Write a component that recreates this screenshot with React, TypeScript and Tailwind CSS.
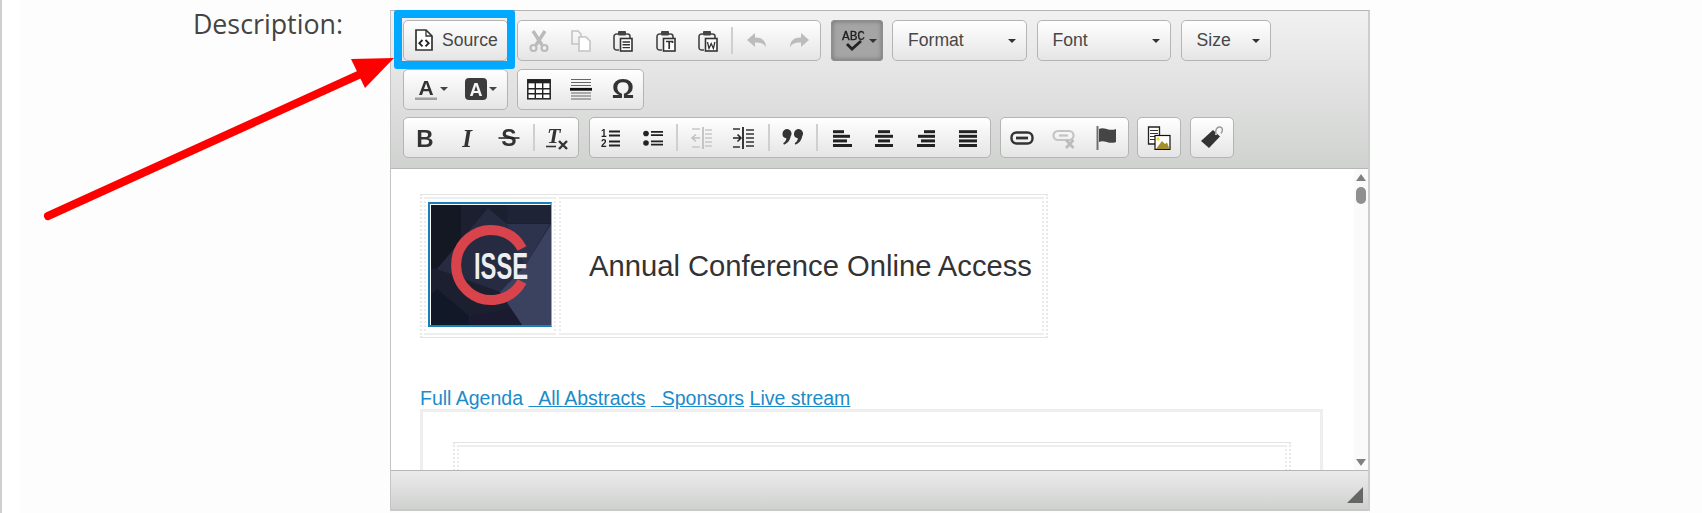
import React from "react";

const Ic = ({ children, w = 24 }: { children: React.ReactNode; w?: number }) => (
  <svg width={w} height={24} viewBox={`0 0 ${w} 24`} className="block shrink-0 blur-[0.35px]">
    {children}
  </svg>
);

const Caret = ({ c = "#333" }: { c?: string }) => (
  <span className="block w-0 h-0 border-x-[4px] border-t-[4px] border-x-transparent" style={{ borderTopColor: c }} />
);

const Group = ({ children }: { children: React.ReactNode }) => (
  <div className="flex h-[41px] items-center rounded-[5px] border border-[#b4b4b4] bg-linear-to-b from-[#ffffff] to-[#e5e5e5]">
    {children}
  </div>
);

const Btn = ({ children }: { children: React.ReactNode }) => (
  <div className="flex w-[42.2px] h-full items-center justify-center">{children}</div>
);

const Narrow = ({ children, w }: { children: React.ReactNode; w: string }) => (
  <div className={`flex ${w} h-full items-center justify-center`}>{children}</div>
);

const Sep = () => <div className="w-[2px] h-[27px] mx-[2.35px] bg-[#cfcfcf]" />;

const Combo = ({ label, w }: { label: string; w: string }) => (
  <div className={`flex h-[41px] ${w} items-center justify-between pl-[15px] pr-[10px] rounded-[5px] border border-[#b4b4b4] bg-linear-to-b from-[#ffffff] to-[#e5e5e5]`}>
    <span className="text-[17.6px] text-[#474747]">{label}</span>
    <Caret />
  </div>
);

const PasteBase = ({ children }: { children?: React.ReactNode }) => (
  <>
    <path d="M7 5H5.5A2.5 2.5 0 0 0 3 7.5v11A2.5 2.5 0 0 0 5.5 21H8M15 5h1.500A2.500 2.500 0 0 1 19 7.500V9" fill="none" stroke="#444" strokeWidth="1.600" />
    <rect x="7" y="2" width="8" height="4.500" rx="1" fill="#444" />
    <rect x="9.500" y="9.500" width="11.500" height="12.500" fill="#fff" stroke="#333" strokeWidth="1.600" />
    {children}
  </>
);

const Bars = ({ xs }: { xs: [number, number][] }) => (
  <>
    {xs.map(([x, w], i) => (
      <rect key={i} x={x} y={4.200 + i * 4.600} width={w} height="3" fill="#222" />
    ))}
  </>
);

const Logo = () => (
  <svg width={120} height={120} viewBox="0 0 120 120" className="block">
    <rect width="120" height="120" fill="#1b1f30" />
    <polygon points="0,0 30,0 30,60 0,64" fill="#131822" />
    <polygon points="57,3 76,19 119,19 94,61 69,87 6,64" fill="#262b42" />
    <polygon points="76,0 120,0 120,18 76,18" fill="#1f2336" />
    <polygon points="76,19 119,19 94,61" fill="#2e334d" />
    <polygon points="120,19 120,120 91,120 69,87 94,61" fill="#3b4260" />
    <polygon points="6,84 38,111 38,120 0,120 0,90" fill="#111827" />
    <polygon points="40,111 80,104 91,120 38,120" fill="#1a1b30" />
    <path d="M91 43.500A35 35 0 1 0 91 76.500" fill="none" stroke="#d9444c" strokeWidth="10" />
    <text x="43" y="74" fontFamily="'Liberation Sans', sans-serif" fontWeight="700" fontSize="36" fill="#eceef0" textLength="54" lengthAdjust="spacingAndGlyphs">ISSE</text>
  </svg>
);

const sans = "'Liberation Sans', sans-serif";
const serif = "'Liberation Serif', serif";

export default function App() {
  return (
    <div className="relative flex w-[1702px] h-[513px] overflow-hidden bg-[#fdfdfd] font-['Liberation_Sans',sans-serif]">
      <div className="w-[20px] h-full border-l-2 border-[#cfcfcf] bg-white" />
      <div className="w-[323px] pt-[6px] text-right text-[26.8px] leading-[36px] text-[#444] font-['Open_Sans',sans-serif]">Description:</div>
      <div className="ml-[47px] mt-[10px] flex flex-col w-[980px] h-[501px] border-l border-t border-r-2 border-b-2 border-t-[#b6b6b6] border-l-[#c4c4c4] border-r-[#cdcdcd] border-b-[#c8c8c8] bg-white">
        {/* toolbar */}
        <div className="flex flex-col h-[158px] pt-[9px] pl-[12px] gap-[7.5px] border-b border-[#b6b6b6] bg-linear-to-b from-[#f1f1f1] to-[#d0d2d0]">
          <div className="flex gap-[9.5px]">
            <Group>
              <div className="flex w-[102.5px] items-center pl-[11px] gap-[9px]">
                <svg width="18" height="22" viewBox="0 0 18 22" className="block shrink-0 blur-[0.3px]">
                  <path d="M1 1h10l6 6v14H1z" fill="#fff" stroke="#333" strokeWidth="1.700" />
                  <path d="M11 1v6h6" fill="none" stroke="#333" strokeWidth="1.300" />
                  <path d="M7.500 11l-3.200 3.200 3.200 3.200M10.500 11l3.200 3.200-3.200 3.200" fill="none" stroke="#222" strokeWidth="1.800" />
                </svg>
                <span className="text-[17.6px] text-[#474747]">Source</span>
              </div>
            </Group>
            <Group>
              <Btn>
                <Ic>
                  <path d="M6 2l9 14M18 2L9 16" stroke="#bbb" strokeWidth="3.400" fill="none" />
                  <circle cx="6.500" cy="19" r="3" fill="none" stroke="#bbb" strokeWidth="2.200" />
                  <circle cx="17.500" cy="19" r="3" fill="none" stroke="#bbb" strokeWidth="2.200" />
                </Ic>
              </Btn>
              <Btn>
                <Ic>
                  <path d="M10 15H3V2h6l3 3v3" fill="none" stroke="#c4c4c4" strokeWidth="1.600" />
                  <path d="M10 8h7l4 4v10H10z" fill="#fff" stroke="#c4c4c4" strokeWidth="1.600" />
                </Ic>
              </Btn>
              <Btn>
                <Ic>
                  <PasteBase>
                    <path d="M11.500 13h7.500M11.500 15.800h7.500M11.500 18.600h7.500" stroke="#333" strokeWidth="1.400" />
                  </PasteBase>
                </Ic>
              </Btn>
              <Btn>
                <Ic>
                  <PasteBase>
                    <path d="M12 12.500h6.500v1.500M15.200 12.500V20" fill="none" stroke="#333" strokeWidth="1.700" />
                  </PasteBase>
                </Ic>
              </Btn>
              <Btn>
                <Ic>
                  <PasteBase>
                    <path d="M11.500 13l1.500 6.500 2.200-5 2.200 5 1.500-6.500" fill="none" stroke="#333" strokeWidth="1.300" />
                  </PasteBase>
                </Ic>
              </Btn>
              <Sep />
              <Btn>
                <Ic>
                  <path d="M2 11l8-7v4.500c7 0 11 3 11 10-2-4-5-5-11-5V18z" fill="#bcbcbc" />
                </Ic>
              </Btn>
              <Btn>
                <Ic>
                  <path d="M22 11l-8-7v4.500c-7 0-11 3-11 10 2-4 5-5 11-5V18z" fill="#bcbcbc" />
                </Ic>
              </Btn>
            </Group>
            <div className="flex h-[41px] w-[52px] items-center pl-[9px] gap-[1px] rounded-[3px] border border-[#8e8e8e] bg-[#a5a5a5] shadow-[inset_0_0_5px_rgba(0,0,0,0.35)]">
              <Ic w={27}>
                <text x="1" y="11" fontFamily="'Liberation Mono', monospace" fontSize="13.500" fill="#222" stroke="#222" strokeWidth="0.300" textLength="23" lengthAdjust="spacingAndGlyphs">ABC</text>
                <path d="M6 15l5 5 9-8" fill="none" stroke="#222" strokeWidth="2.800" />
              </Ic>
              <Caret />
            </div>
            <Combo label="Format" w="w-[135px]" />
            <Combo label="Font" w="w-[134.5px]" />
            <Combo label="Size" w="w-[90.5px]" />
          </div>
          <div className="flex gap-[9.5px]">
            <Group>
              <div className="flex w-[102.5px] h-full items-center">
                <div className="flex w-[50px] pl-[10px] items-center gap-[2px]">
                  <svg width="24" height="24" viewBox="0 0 24 24" className="block shrink-0 blur-[0.3px]">
                    <text x="12" y="17.500" textAnchor="middle" fontFamily={sans} fontWeight="700" fontSize="21" fill="#333">A</text>
                    <rect x="1" y="20.500" width="22" height="2.500" fill="#a0a0a0" />
                  </svg>
                  <Caret c="#444" />
                </div>
                <div className="flex pl-[11px] items-center gap-[2px]">
                  <svg width="22" height="22" viewBox="0 0 22 22" className="block shrink-0 blur-[0.3px]">
                    <rect width="22" height="22" rx="4" fill="#3c3c3c" />
                    <text x="11" y="17.500" textAnchor="middle" fontFamily={sans} fontWeight="700" fontSize="18" fill="#f4f4f4">A</text>
                  </svg>
                  <Caret c="#444" />
                </div>
              </div>
            </Group>
            <Group>
              <Btn>
                <Ic>
                  <rect x="0.800" y="2.800" width="22.400" height="19" fill="#fff" stroke="#222" strokeWidth="1.500" />
                  <rect x="0.800" y="2.800" width="22.400" height="3.500" fill="#222" />
                  <path d="M8.300 6v15M15.700 6v15M1 11.800h22M1 16.800h22" stroke="#222" strokeWidth="1.400" />
                </Ic>
              </Btn>
              <Btn>
                <Ic>
                  <path d="M2 2.500h20M2 5.500h20M2 8.500h20M2 16h20M2 19h20M2 22h20" stroke="#666" strokeWidth="1.200" />
                  <path d="M1 12.300h22" stroke="#111" strokeWidth="2.800" />
                </Ic>
              </Btn>
              <Narrow w="w-[41px]">
                <span className="text-[28px] leading-none font-bold text-[#333] blur-[0.3px]">Ω</span>
              </Narrow>
            </Group>
          </div>
          <div className="flex">
            <Group>
              <Btn>
                <Ic>
                  <text x="12" y="20.500" textAnchor="middle" fontFamily={sans} fontWeight="700" fontSize="24" fill="#333">B</text>
                </Ic>
              </Btn>
              <Btn>
                <Ic>
                  <text x="12" y="20.500" textAnchor="middle" fontFamily={serif} fontStyle="italic" fontWeight="700" fontSize="25" fill="#333">I</text>
                </Ic>
              </Btn>
              <Btn>
                <Ic>
                  <text x="12" y="20" textAnchor="middle" fontFamily={sans} fontWeight="700" fontSize="23" fill="#333">S</text>
                  <path d="M1.500 12h21" stroke="#222" strokeWidth="1.500" />
                </Ic>
              </Btn>
              <Sep />
              <Narrow w="w-[41px]">
                <Ic>
                  <text x="1" y="17" fontFamily={serif} fontStyle="italic" fontWeight="700" fontSize="22" fill="#333">T</text>
                  <path d="M0 20.500h10" stroke="#333" strokeWidth="1.600" />
                  <path d="M13 15l8 8M21 15l-8 8" stroke="#333" strokeWidth="2.400" />
                </Ic>
              </Narrow>
            </Group>
            <div className="w-[9.5px]" />
            <Group>
              <Btn>
                <Ic>
                  <text x="2" y="10.500" fontFamily={sans} fontWeight="700" fontSize="10" fill="#222">1</text>
                  <text x="2" y="20.500" fontFamily={sans} fontWeight="700" fontSize="10" fill="#222">2</text>
                  <path d="M10 5.500h11M10 9.500h11M10 15.500h11M10 19.500h11" stroke="#222" strokeWidth="1.800" />
                </Ic>
              </Btn>
              <Btn>
                <Ic>
                  <circle cx="5" cy="7.500" r="2.800" fill="#222" />
                  <circle cx="5" cy="17" r="2.800" fill="#222" />
                  <path d="M10 5.800h12M10 9.200h12M10 15.300h12M10 18.700h12" stroke="#222" strokeWidth="1.700" />
                </Ic>
              </Btn>
              <Sep />
              <Btn>
                <Ic>
                  <path d="M13 1v22" stroke="#c0c0c0" strokeWidth="1.800" />
                  <path d="M10 12H2M6 8.500L2 12l4 3.500" fill="none" stroke="#c0c0c0" strokeWidth="1.500" />
                  <path d="M15 4h7M15 8h7M15 12h7M15 16h7M15 20h7M2 3h8M2 21h8" stroke="#c8c8c8" strokeWidth="1.400" />
                </Ic>
              </Btn>
              <Btn>
                <Ic>
                  <path d="M11 1v22" stroke="#222" strokeWidth="1.800" />
                  <path d="M1 12h8M5.500 8.500L9 12l-3.500 3.500" fill="none" stroke="#222" strokeWidth="1.500" />
                  <path d="M14 4h8M14 8h8M14 12h8M14 16h8M14 20h8M1 3h7M1 21h7" stroke="#333" strokeWidth="1.500" />
                </Ic>
              </Btn>
              <Sep />
              <Btn>
                <Ic>
                  <path d="M1.500 7.500a4.500 4.500 0 1 1 8.300 2.500c-.8 4.500-3 7-6.800 8.700l-.8-1.600c2-1.100 3-2.800 3.200-4.900a4.500 4.500 0 0 1-3.900-4.700z" fill="#333" />
                  <path d="M13 7.500a4.500 4.500 0 1 1 8.300 2.500c-.8 4.500-3 7-6.800 8.700l-.8-1.600c2-1.100 3-2.800 3.200-4.900a4.500 4.500 0 0 1-3.900-4.700z" fill="#333" />
                </Ic>
              </Btn>
              <Sep />
              <Btn><Ic><Bars xs={[[3, 11], [3, 17], [3, 14], [3, 19]]} /></Ic></Btn>
              <Btn><Ic><Bars xs={[[6, 12], [3, 18], [6, 12], [3, 18]]} /></Ic></Btn>
              <Btn><Ic><Bars xs={[[10, 11], [4, 17], [7, 14], [3, 18]]} /></Ic></Btn>
              <Btn><Ic><Bars xs={[[3, 18], [3, 18], [3, 18], [3, 18]]} /></Ic></Btn>
            </Group>
            <div className="w-[9.5px]" />
            <Group>
              <Btn>
                <Ic>
                  <rect x="1.500" y="6.500" width="21" height="11" rx="5" fill="none" stroke="#333" strokeWidth="2.400" />
                  <path d="M6 12h12" stroke="#333" strokeWidth="2.800" />
                </Ic>
              </Btn>
              <Btn>
                <Ic>
                  <rect x="1.500" y="5" width="20" height="9" rx="4.500" fill="none" stroke="#c4c4c4" strokeWidth="2.200" />
                  <path d="M7 9.500h9" stroke="#c4c4c4" strokeWidth="2.200" />
                  <path d="M14 14l7.500 8M21.500 14L14 22" stroke="#bbb" strokeWidth="2.600" />
                </Ic>
              </Btn>
              <Btn>
                <Ic>
                  <path d="M3.500 0v24" stroke="#707070" strokeWidth="2" />
                  <path d="M5 3c5-3 10 3 17 0v13c-7 3-12-3-17 0z" fill="#454545" />
                </Ic>
              </Btn>
            </Group>
            <div className="w-[8.5px]" />
            <Group>
              <Narrow w="w-[41.6px]">
                <Ic>
                  <path d="M1.500 1h11v17h-11z" fill="#fff" stroke="#222" strokeWidth="1.300" />
                  <path d="M3 4.500h8M3 7.500h8M3 10.500h5M3 13.500h5" stroke="#333" strokeWidth="1.200" />
                  <rect x="8" y="9.500" width="15" height="14" fill="#fff" stroke="#111" strokeWidth="1.200" />
                  <circle cx="11" cy="13" r="1.700" fill="#f4dc28" />
                  <path d="M9 23l6-8 3 3 2-1.500 2.500 6.500z" fill="#a48f2c" />
                </Ic>
              </Narrow>
            </Group>
            <div className="w-[9.5px]" />
            <Group>
              <Narrow w="w-[41.6px]">
                <Ic>
                  <path d="M1 15L13 4l7 6.500L9 22z" fill="#333" />
                  <circle cx="16" cy="8" r="1.100" fill="#eee" />
                  <path d="M16 8c-1-4 1-7.500 4-7s3 3.500 1 6.500" fill="none" stroke="#999" strokeWidth="1.400" />
                </Ic>
              </Narrow>
            </Group>
          </div>
        </div>
        {/* content */}
        <div className="flex h-[301px] overflow-hidden">
          <div className="flex-1 overflow-hidden pl-[29px] pt-[25px]">
            <div className="flex w-[628px] h-[144px] p-[2px] gap-[3px] border-y border-x-2 border-x-[#e8e8e8] border-y-[#e4e4e4] [border-left-style:dotted] [border-right-style:dotted]">
              <div className="w-[132px] h-[138px] pl-[2px] pt-[3px] border-y-2 border-x-2 border-x-[#ececec] border-y-[#eeeeee] [border-left-style:dotted] [border-right-style:dotted]">
                <div className="w-[124px] h-[125px] border-2 border-[#1a7fb8] border-r-[#6fb3d8] p-[1px]">
                  <Logo />
                </div>
              </div>
              <div className="flex flex-1 h-[138px] items-center pl-[28px] pt-[2px] border-y-2 border-x-2 border-x-[#ececec] border-y-[#eeeeee] [border-left-style:dotted] [border-right-style:dotted]">
                <span className="text-[29.2px] text-[#333] whitespace-nowrap">Annual Conference Online Access</span>
              </div>
            </div>
            <div className="mt-[47px] h-[24px] leading-[27px] text-[19.5px] text-[#1b8bc9] whitespace-pre">
              Full Agenda <span className="underline">{"\u00a0 All Abstracts"}</span> <span className="underline">{"\u00a0 Sponsors"}</span> <span className="underline">Live stream</span>
            </div>
            <div className="w-[903px] h-[200px] border-[3px] border-[#eeeeee] pl-[30px] pt-[30px]">
              <div className="w-[838px] h-[160px] p-[2px] border-y border-x-2 border-x-[#e8e8e8] border-y-[#e4e4e4] [border-left-style:dotted] [border-right-style:dotted]">
                <div className="w-full h-full border-y-2 border-x-2 border-x-[#ececec] border-y-[#eeeeee] [border-left-style:dotted] [border-right-style:dotted]" />
              </div>
            </div>
          </div>
          <div className="flex flex-col items-center w-[14px] bg-[#fafafa] pt-[5px]">
            <span className="block w-0 h-0 border-x-[5px] border-b-[7px] border-x-transparent border-b-[#808080]" />
            <span className="block mt-[6px] w-[10px] h-[17px] rounded-[5px] bg-[#8f8f8f]" />
            <span className="block mt-auto mb-[4px] w-0 h-0 border-x-[5px] border-t-[7px] border-x-transparent border-t-[#808080]" />
          </div>
        </div>
        {/* footer */}
        <div className="flex flex-1 items-end justify-end pr-[5px] pb-[6px] border-t border-[#b6b6b6] bg-linear-to-b from-[#ebebeb] to-[#cfd1cf]">
          <svg width="16" height="16" viewBox="0 0 16 16" className="block">
            <path d="M16 0v16H0z" fill="#666" />
          </svg>
        </div>
      </div>
      {/* annotations */}
      <div className="absolute left-[394px] top-[10px] w-[121px] h-[59px] rounded-[3px] border-[8px] border-[#00a8ff]" />
      <svg className="absolute left-0 top-0 pointer-events-none" width="420" height="240" viewBox="0 0 420 240">
        <path d="M48 216L365 72" stroke="#ff0000" strokeWidth="8" strokeLinecap="round" fill="none" />
        <polygon points="351,59 394,58 365,88" fill="#ff0000" />
      </svg>
    </div>
  );
}
